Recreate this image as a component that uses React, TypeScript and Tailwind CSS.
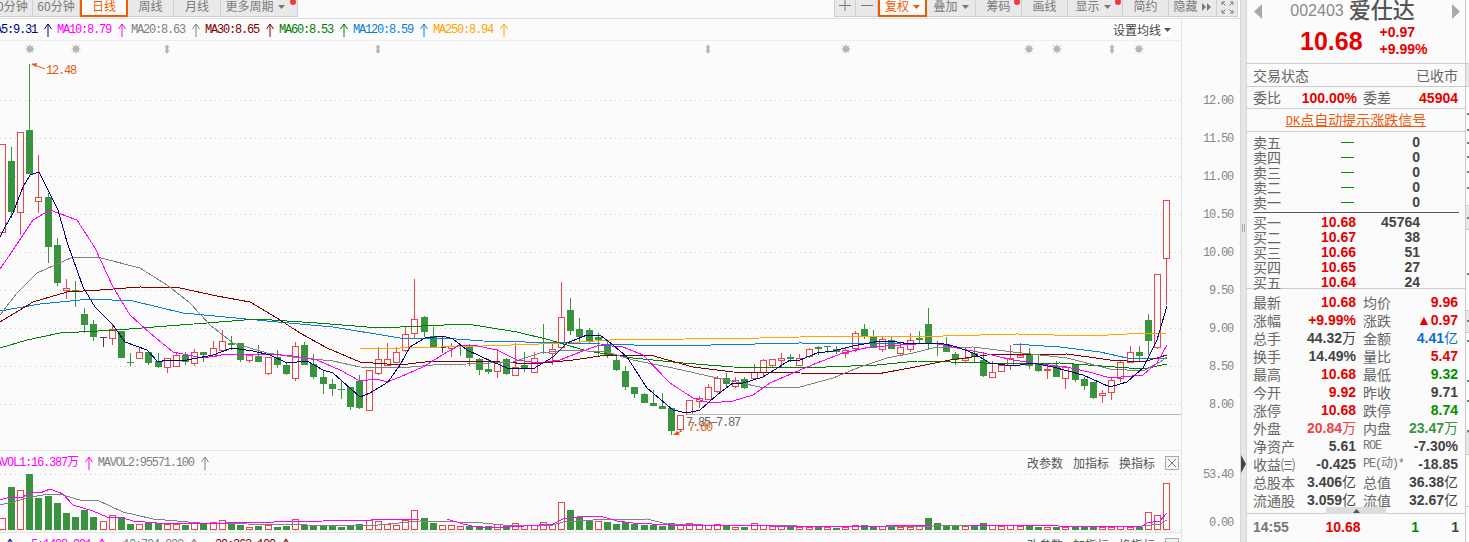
import React from 'react';

const mono = "font-['Liberation_Mono','Noto_Sans_CJK_SC',monospace]";
const monoText = `${mono} text-[12px] tracking-[-1.2px]`;
const RED = '#e8484a';
const GREEN = '#3a933e';

// i, body top, body bottom, wick high, wick low (page pixels)
const up: number[][] = [
  [0, 144, 232, 144, 232], [2, 132, 212, 132, 235], [4, 197, 201, 155, 213], [7, 288, 290, 279, 299], [12, 329, 338, 325, 345],
  [15, 352, 358, 348, 358], [18, 358, 367, 358, 373], [19, 355, 366, 353, 366], [21, 352, 363, 349, 366], [23, 348, 356, 341, 357],
  [24, 341, 350, 330, 350], [27, 355, 360, 355, 363], [29, 357, 373, 357, 375], [32, 346, 378, 342, 381], [40, 370, 410, 370, 410],
  [41, 359, 373, 347, 375], [42, 359, 365, 343, 365], [43, 352, 362, 347, 362], [44, 334, 350, 326, 352], [45, 319, 333, 279, 338],
  [49, 346, 348, 343, 357], [54, 362, 371, 349, 378], [56, 367, 375, 343, 375], [58, 358, 372, 352, 373], [60, 349, 353, 342, 365],
  [61, 317, 347, 282, 347], [74, 415, 429, 415, 432], [75, 400, 414, 400, 414], [76, 398, 401, 396, 408], [77, 387, 399, 384, 400],
  [78, 378, 391, 376, 393], [80, 380, 386, 377, 388], [82, 372, 378, 364, 378], [83, 360, 372, 359, 377], [84, 359, 365, 359, 368],
  [85, 358, 360, 353, 368], [87, 358, 365, 354, 365], [88, 349, 356, 348, 358], [92, 350, 353, 347, 358], [93, 333, 348, 331, 352],
  [96, 339, 349, 337, 352], [98, 347, 353, 343, 355], [99, 340, 349, 333, 352], [105, 358, 360, 348, 363], [108, 372, 377, 361, 377],
  [109, 365, 371, 365, 371], [110, 358, 365, 345, 370], [111, 355, 357, 343, 357], [114, 369, 370, 363, 379], [116, 367, 378, 367, 389],
  [120, 393, 395, 390, 403], [121, 380, 392, 378, 400], [122, 362, 378, 360, 382], [123, 352, 362, 346, 363], [126, 274, 347, 274, 349],
  [127, 200, 258, 200, 305],
];
const down: number[][] = [
  [1, 161, 212, 147, 218], [3, 130, 174, 64, 174], [5, 197, 247, 193, 263], [6, 245, 283, 238, 286], [8, 290, 291, 281, 307],
  [9, 314, 325, 308, 333], [10, 324, 337, 320, 341], [13, 331, 358, 331, 358], [14, 362, 363, 353, 366], [16, 352, 363, 352, 365],
  [17, 361, 367, 353, 368], [20, 355, 362, 352, 365], [22, 352, 355, 352, 362], [25, 343, 345, 336, 350], [26, 343, 360, 343, 362],
  [28, 356, 362, 345, 362], [30, 357, 365, 350, 368], [31, 365, 374, 363, 375], [33, 345, 365, 342, 365], [34, 364, 377, 354, 379],
  [35, 377, 384, 370, 394], [36, 384, 389, 379, 396], [37, 389, 390, 380, 399], [38, 387, 407, 387, 410], [39, 381, 408, 375, 409],
  [46, 317, 332, 316, 337], [47, 336, 347, 327, 348], [50, 345, 346, 344, 356], [51, 346, 358, 344, 366], [52, 359, 370, 358, 375],
  [53, 369, 372, 359, 374], [55, 359, 374, 358, 375], [57, 365, 368, 352, 372], [59, 352, 353, 324, 354], [62, 310, 331, 298, 335],
  [63, 329, 337, 318, 344], [64, 330, 341, 328, 343], [65, 337, 340, 333, 357], [66, 344, 355, 340, 358], [67, 360, 370, 355, 371],
  [68, 371, 387, 366, 390], [69, 387, 394, 387, 398], [70, 394, 403, 393, 403], [71, 403, 406, 390, 406], [72, 406, 409, 393, 409],
  [73, 408, 431, 408, 435], [79, 378, 384, 373, 387], [81, 379, 388, 377, 389], [86, 357, 359, 354, 362], [89, 347, 349, 346, 355],
  [90, 346, 347, 346, 353], [91, 349, 352, 346, 354], [94, 329, 337, 324, 339], [95, 337, 348, 330, 348], [97, 340, 349, 337, 349],
  [100, 338, 340, 331, 343], [101, 324, 343, 308, 349], [102, 343, 344, 341, 356], [103, 344, 352, 337, 352], [104, 354, 360, 352, 365],
  [106, 353, 357, 348, 363], [107, 360, 376, 352, 377], [112, 355, 366, 348, 369], [113, 364, 371, 354, 372], [115, 366, 377, 361, 377],
  [117, 364, 380, 364, 382], [118, 379, 386, 377, 390], [119, 382, 398, 382, 399], [124, 352, 356, 346, 362], [125, 320, 341, 314, 355],
];

const candleX = (i: number) => Math.round(2.7 + i * 9.17);

const maLines: [string, string][] = [
  ['#0a7fd8', '0,311 40,304 90,299 133,301 183,313 267,321 333,327 400,338 443,338 483,341 567,343 667,346 800,343 900,344 1013,344 1060,347 1100,352 1127,358 1167,359'],
  ['#ffa500', '360,348 400,348 483,346 567,343 610,340 760,338 800,337 943,336 1017,334 1090,336 1127,334 1167,333'],
  ['#008000', '0,348 27,340 60,333 117,330 167,326 207,323 257,319 317,323 367,327 400,327 467,324 517,332 550,340 587,351 633,358 683,363 733,367 800,368 877,365 917,361 1017,364 1060,363 1143,369 1167,364'],
  ['#800000', '0,322 33,302 67,292 100,290 140,287 180,288 217,296 250,302 277,318 300,333 327,348 360,362 400,365 433,361 483,361 533,364 573,360 607,355 650,355 693,367 733,372 800,373 877,374 910,368 950,360 987,355 1067,354 1110,360 1143,362 1167,355'],
  ['#808080', '0,315 17,293 37,273 73,257 97,257 140,268 167,285 190,303 210,325 233,343 267,353 293,357 333,361 360,367 400,368 433,365 467,364 513,362 540,353 567,350 607,352 633,360 673,368 717,378 760,387 800,387 833,378 860,367 887,358 913,353 933,348 973,347 1013,352 1067,358 1110,369 1143,371 1160,362 1167,357'],
  ['#ff00ff', '0,269 13,250 33,220 50,210 77,220 95,248 113,287 130,315 150,333 173,352 203,358 227,354 270,354 293,356 317,360 340,370 360,381 377,379 387,382 400,377 423,367 447,352 460,345 473,345 497,350 517,360 538,363 560,360 580,352 600,345 623,347 643,355 670,383 693,398 710,403 733,401 753,395 770,383 800,370 817,363 843,353 870,347 900,345 933,343 957,348 983,353 1013,360 1040,364 1067,367 1093,373 1110,378 1143,375 1157,363 1167,345'],
  ['#000080', '0,237 5,227 13,213 23,187 30,175 39,172 58,210 67,242 83,287 95,307 113,325 125,342 147,350 158,362 167,360 187,360 213,355 232,348 253,351 270,355 287,363 307,361 323,370 333,373 360,397 370,393 388,382 400,365 410,347 425,338 443,336 453,339 467,350 493,362 507,368 533,369 553,357 567,343 587,335 600,335 613,345 627,357 647,388 673,410 687,413 700,410 717,395 733,383 743,383 763,377 790,360 800,360 817,353 833,351 853,346 880,341 897,342 910,344 940,343 957,347 973,353 990,363 1013,366 1033,363 1053,367 1083,375 1110,387 1127,382 1143,368 1157,340 1167,306'],
];

// top of each volume bar, by candle index
const volTop = [518, 487, 490, 474, 498, 496, 503, 513, 517, 510, 517, 521, 515, 517, 524, 524, 523, 523, 524, 524, 525, 523, 523, 522, 520, 523, 525, 527, 526, 525, 527, 526, 519, 525, 525, 525, 525, 527, 526, 524, 520, 521, 524, 525, 520, 510, 518, 523, 525, 525, 526, 526, 526, 526, 524, 526, 523, 525, 525, 522, 524, 502, 510, 517, 520, 521, 522, 524, 522, 524, 525, 525, 526, 523, 525, 523, 525, 525, 524, 525, 527, 527, 523, 525, 526, 526, 525, 527, 527, 527, 527, 528, 527, 525, 525, 527, 526, 526, 527, 527, 526, 518, 523, 525, 525, 526, 525, 523, 525, 526, 525, 526, 526, 527, 527, 527, 527, 527, 527, 527, 527, 527, 526, 527, 527, 512, 515, 483];
const volRed = new Set([0, 2, 11, 12, 15, 18, 19, 21, 23, 24, 27, 29, 32, 40, 41, 42, 43, 44, 45, 48, 49, 50, 54, 56, 57, 58, 59, 60, 61, 65, 74, 75, 76, 77, 78, 80, 82, 83, 84, 85, 87, 88, 90, 92, 93, 96, 98, 99, 100, 105, 108, 109, 110, 111, 114, 116, 120, 121, 122, 123, 125, 126, 127]);

const volLines: [string, string][] = [
  ['#808080', '0,505 13,502 30,497 50,494 63,495 83,501 97,500 123,512 153,519 200,523 247,524 367,526 420,521 457,522 483,523 503,525 553,525 563,522 593,520 647,519 667,524 703,525 797,526 840,527 933,526 990,525 1017,525 1100,527 1143,526 1160,524 1167,520'],
  ['#ff00ff', '0,500 10,497 23,497 30,492 40,493 50,489 63,494 73,505 93,511 107,517 123,518 133,521 157,523 177,524 420,519 447,519 463,524 477,527 510,527 553,524 563,519 577,517 600,516 617,521 633,523 670,525 703,525 840,527 933,525 970,525 990,525 1127,527 1142,526 1147,523 1160,521 1167,513'],
];

const Caret = ({ color = '#777777' }: { color?: string }) => (
  <svg width="7" height="4" viewBox="0 0 7 4" className="shrink-0">
    <polygon points="0,0 7,0 3.5,4" fill={color} />
  </svg>
);

const Dot = () => <span className="absolute -top-[1px] right-[1px] h-[6px] w-[6px] rounded-full bg-[#f03a3a]" />;

const Tool = ({ w, children, active, dot }: { w: string; children: React.ReactNode; active?: boolean; dot?: boolean }) => (
  <div
    className={`relative flex h-[17px] shrink-0 items-start justify-center gap-1 border-b pt-[0px] text-[12px] leading-[12px] ${w} ${
      active ? 'border-x-2 border-b-2 border-[#f05a00] bg-[#fbfbfb] text-[#f05a00]' : 'border-r border-[#cfcfcf] bg-[#e9e9e9] text-[#7a7a7a]'
    }`}
  >
    {children}
    {dot && <Dot />}
  </div>
);

const Arrow = ({ color }: { color: string }) => (
  <svg width="8" height="14" viewBox="0 0 8 14" className="shrink-0">
    <path d="M4 14V1M0.5 6L4 1l3.5 5" fill="none" stroke={color} strokeWidth="1" />
  </svg>
);

const MaItem = ({ label, color, textClass }: { label: string; color: string; textClass: string }) => (
  <div className="flex items-center gap-[7px]">
    <span className={`${monoText} whitespace-nowrap ${textClass}`}>{label}</span>
    <Arrow color={color} />
  </div>
);

const Sun = ({ x }: { x: number }) => (
  <g stroke="#b4b4b4" strokeWidth="1">
    <circle cx={x} cy={49} r={2.6} fill="#b4b4b4" />
    <path d={`M${x - 4.5} 49h9M${x} 44.5v9M${x - 3.5} 45.5l7 7M${x + 3.5} 45.5l-7 7`} />
  </g>
);

const Diamond = ({ x }: { x: number }) => (
  <path d={`M${x} 44.5l2.5 3h-1.2v3h1.2l-2.5 3.500-2.500-3.500h1.200v-3h-1.200z`} fill="#b4b4b4" />
);

const PaneTools = ({ close }: { close?: boolean }) => (
  <div className="flex items-center gap-[10px] text-[12px] text-[#555555]">
    <span>改参数</span>
    <span>加指标</span>
    <span>换指标</span>
    <span className="relative flex h-[14px] w-[14px] items-center justify-center border border-[#a8a8a8] bg-[#f4f4f4]">
      {close && (
        <svg width="10" height="10" viewBox="0 0 10 10">
          <path d="M1 1l8 8M9 1l-8 8" stroke="#777777" strokeWidth="1" />
        </svg>
      )}
    </span>
  </div>
);

const Chart = () => (
  <svg width="1240" height="409" viewBox="0 41 1240 409" className="block shrink-0">
    {[100, 138, 176, 214, 252, 290, 328, 366, 404].map((y) => (
      <line key={y} x1="0" x2="1181" y1={y + 0.5} y2={y + 0.5} stroke="#cfcfcf" strokeWidth="1" strokeDasharray="1 4" />
    ))}
    <g shapeRendering="crispEdges">
      {down.map(([i, t, b, h, l]) => (
        <g key={i}>
          <line x1={candleX(i) - 0.5} x2={candleX(i) - 0.5} y1={h} y2={l} stroke={GREEN} />
          <rect x={candleX(i) - 4} y={t} width="7" height={Math.max(b - t, 1)} fill={GREEN} />
        </g>
      ))}
      {up.map(([i, t, b, h, l]) => (
        <g key={i}>
          <line x1={candleX(i) - 0.5} x2={candleX(i) - 0.5} y1={h} y2={t} stroke={RED} />
          <line x1={candleX(i) - 0.5} x2={candleX(i) - 0.5} y1={b} y2={l} stroke={RED} />
          <rect x={candleX(i) - 3.5} y={t + 0.5} width="6" height={Math.max(b - t, 1)} fill="#fbfbfb" stroke={RED} />
        </g>
      ))}
      <path d="M100 337.500h7M103.500 337v10M439 347.500h7M442.500 336v17" stroke="#444444" fill="none" />
      {maLines.map(([color, pts]) => (
        <polyline key={color} points={pts} fill="none" stroke={color} strokeWidth="1" />
      ))}
    </g>
    {[30, 76, 846, 1029, 1057, 1139].map((x) => (
      <Sun key={x} x={x} />
    ))}
    {[167, 378, 708, 1112].map((x) => (
      <Diamond key={x} x={x} />
    ))}
    <path d="M45 69l-13-5" stroke="#e85a10" fill="none" />
    <polygon points="31,64 37,63 36,67" fill="#e85a10" />
    <text x="46" y="74" className={monoText} fill="#e85a10">
      12.48
    </text>
    <line x1="687" x2="1181" y1="414.500" y2="414.500" stroke="#b8b8b8" />
    <text x="686" y="426" className={monoText} fill="#666666">
      7.85—7.87
    </text>
    <text x="688" y="431" className={monoText} fill="#e85a10">
      7.60
    </text>
    <path d="M682 431l-7 3" stroke="#e85a10" fill="none" />
    <polygon points="673,435 680,435 677,431" fill="#e85a10" />
    {['12.00', '11.50', '11.00', '10.50', '10.00', '9.50', '9.00', '8.50', '8.00'].map((p, i) => (
      <text key={p} x="1233" y={104 + i * 38} textAnchor="end" className={monoText} fill="#888888">
        {p}
      </text>
    ))}
    <line x1="1181.500" x2="1181.500" y1="41" y2="450" stroke="#e4e4e4" />
  </svg>
);

const Volume = () => (
  <svg width="1240" height="58" viewBox="0 474 1240 58" className="block shrink-0 overflow-visible">
    <line x1="0" x2="1181" y1="474.500" y2="474.500" stroke="#cfcfcf" strokeDasharray="1 4" />
    <line x1="0" x2="1181" y1="530.500" y2="530.500" stroke="#cfcfcf" strokeDasharray="1 4" />
    <g shapeRendering="crispEdges">
      {volTop.map((t, i) =>
        volRed.has(i) ? (
          <rect key={i} x={candleX(i) - 3.5} y={t + 0.5} width="6" height={529 - t} fill="#fbfbfb" stroke={RED} />
        ) : (
          <rect key={i} x={candleX(i) - 4} y={t} width="7" height={530 - t} fill={GREEN} />
        ),
      )}
      {volLines.map(([color, pts]) => (
        <polyline key={color} points={pts} fill="none" stroke={color} strokeWidth="1" />
      ))}
    </g>
    <text x="1233" y="478" textAnchor="end" className={monoText} fill="#888888">
      53.40
    </text>
    <text x="1233" y="526" textAnchor="end" className={monoText} fill="#888888">
      0.00
    </text>
    <line x1="1181.500" x2="1181.500" y1="474" y2="532" stroke="#e4e4e4" />
  </svg>
);

const numFont = "font-['Liberation_Sans','Noto_Sans_CJK_SC',sans-serif] font-bold text-[14px]";

const Val = ({ v, c }: { v: string; c: string }) => {
  const unit = /[万亿]$/.test(v) ? v.slice(-1) : '';
  const num = unit ? v.slice(0, -1) : v;
  return (
    <span className={`whitespace-nowrap ${numFont} ${c}`}>
      {num}
      {unit && <span className="font-normal">{unit}</span>}
    </span>
  );
};

const stats: [string, string, string, string, string, string][] = [
  ['最新', '10.68', 'text-[#e60000]', '均价', '9.96', 'text-[#e60000]'],
  ['涨幅', '+9.99%', 'text-[#e60000]', '涨跌', '▲0.97', 'text-[#e60000]'],
  ['总手', '44.32万', 'text-[#444444]', '金额', '4.41亿', 'text-[#0a70d0]'],
  ['换手', '14.49%', 'text-[#444444]', '量比', '5.47', 'text-[#e60000]'],
  ['最高', '10.68', 'text-[#e60000]', '最低', '9.32', 'text-[#009000]'],
  ['今开', '9.92', 'text-[#e60000]', '昨收', '9.71', 'text-[#444444]'],
  ['涨停', '10.68', 'text-[#e60000]', '跌停', '8.74', 'text-[#009000]'],
  ['外盘', '20.84万', 'text-[#ee4444]', '内盘', '23.47万', 'text-[#3a933e]'],
  ['净资产', '5.61', 'text-[#444444]', 'ROE', '-7.30%', 'text-[#444444]'],
  ['收益㈢', '-0.425', 'text-[#444444]', 'PE(动)*', '-18.85', 'text-[#444444]'],
  ['总股本', '3.406亿', 'text-[#444444]', '总值', '36.38亿', 'text-[#444444]'],
  ['流通股', '3.059亿', 'text-[#444444]', '流值', '32.67亿', 'text-[#444444]'],
];

const sells = ['卖五', '卖四', '卖三', '卖二', '卖一'];
const buys: [string, string, string][] = [
  ['买一', '10.68', '45764'],
  ['买二', '10.67', '38'],
  ['买三', '10.66', '51'],
  ['买四', '10.65', '27'],
  ['买五', '10.64', '24'],
];

const QuoteRow = ({ label, price, vol }: { label: string; price?: string; vol: string }) => (
  <div className="grid h-[15px] grid-cols-[103px_64px] items-center text-[14px] leading-[15px] text-[#666666]">
    <div className="flex justify-between">
      <span>{label}</span>
      {price ? <Val v={price} c="text-[#e60000]" /> : <span className="mr-[2px] mt-[7px] h-[1px] w-[13px] bg-[#009000]" />}
    </div>
    <div className="text-right">
      <Val v={vol} c="text-[#444444]" />
    </div>
  </div>
);

const Quote = () => (
  <div className="flex h-[542px] w-[218px] shrink-0 flex-col bg-[#fbfbfb] font-['Noto_Sans_CJK_SC',sans-serif] text-[#666666]">
    <div className="relative h-[64px] shrink-0 overflow-hidden border-b border-[#cccccc]">
      <div className="flex h-[22px] items-center justify-between pl-[7px] pr-[5px]">
        <svg width="8" height="15" viewBox="0 0 8 15">
          <polygon points="8,0 8,15 0,7.500" fill="#a8a8a8" />
        </svg>
        <div className="mr-[9px] flex items-center gap-[5px]">
          <span className="font-['Liberation_Sans',sans-serif] text-[16px] text-[#8a8a8a]">002403</span>
          <span className="-mt-[6px] text-[22px] font-medium leading-[26px] text-[#555555]">爱仕达</span>
        </div>
        <svg width="8" height="15" viewBox="0 0 8 15">
          <polygon points="0,0 0,15 8,7.500" fill="#a8a8a8" />
        </svg>
      </div>
      <div className="flex items-center gap-[17px] pl-[53px]">
        <span className="font-['Liberation_Sans',sans-serif] text-[25px] font-bold leading-[38px] text-[#e60000]">10.68</span>
        <div className="flex flex-col font-['Liberation_Sans',sans-serif] text-[14px] font-bold leading-[17px] text-[#e60000]">
          <span>+0.97</span>
          <span>+9.99%</span>
        </div>
      </div>
    </div>
    <div className="flex h-[23px] shrink-0 items-center justify-between border-b border-[#cccccc] pl-[6px] pr-[7px] text-[14px]">
      <span>交易状态</span>
      <span>已收市</span>
    </div>
    <div className="flex h-[22px] shrink-0 items-center whitespace-nowrap border-b border-[#cccccc] pl-[6px] pr-[7px] text-[14px]">
      <span className="w-[28px]">委比</span>
      <span className="w-[76px] text-right">
        <Val v="100.00%" c="text-[#e60000]" />
      </span>
      <span className="ml-[6px]">委差</span>
      <span className="flex-1 text-right">
        <Val v="45904" c="text-[#e60000]" />
      </span>
    </div>
    <div className="flex h-[23px] shrink-0 items-center justify-center border-b border-[#cccccc] text-[14px] text-[#ee5a0a]">
      <span className="underline">
        <span className={`${mono} text-[12px]`}>DK</span>点自动提示涨跌信号
      </span>
    </div>
    <div className="flex h-[80px] shrink-0 flex-col pl-[6px] pt-[2px]">
      {sells.map((s) => (
        <QuoteRow key={s} label={s} vol="0" />
      ))}
    </div>
    <div className="mx-[6px] h-[1px] w-[206px] shrink-0 bg-[#555555]" />
    <div className="flex h-[76px] shrink-0 flex-col border-b border-[#cccccc] pl-[6px] pt-[1px]">
      {buys.map(([l, p, v]) => (
        <QuoteRow key={l} label={l} price={p} vol={v} />
      ))}
    </div>
    <div className="flex h-[218px] shrink-0 flex-col pl-[6px] pt-[4px]">
      {stats.map(([a, av, ac, b, bv, bc]) => (
        <div key={a} className="grid h-[18px] grid-cols-[103px_95px] items-center gap-x-[7px] text-[14px] leading-[18px]">
          <div className="flex justify-between">
            <span className="whitespace-nowrap">{a}</span>
            <Val v={av} c={ac} />
          </div>
          <div className="flex justify-between">
            <span className={b === 'ROE' || b === 'PE(动)*' ? `${monoText} text-[#777777]` : ''}>{b}</span>
            <Val v={bv} c={bc} />
          </div>
        </div>
      ))}
    </div>
    <div className="flex h-[7px] shrink-0 items-start justify-center border-b border-[#cccccc]">
      <div className="flex h-[7px] w-[60px] items-center justify-center bg-[#dddddd]">
        <svg width="7" height="4" viewBox="0 0 7 4">
          <polygon points="0,4 7,4 3.500,0" fill="#555555" />
        </svg>
      </div>
    </div>
    <div className="flex h-[22px] items-center pl-[6px] pr-[6px]">
      <span className="w-[60px]">
        <Val v="14:55" c="text-[#777777]" />
      </span>
      <span className="w-[60px] text-center">
        <Val v="10.68" c="text-[#e60000]" />
      </span>
      <span className="w-[46px] text-right">
        <Val v="1" c="text-[#009000]" />
      </span>
      <span className="flex-1 text-right">
        <Val v="1" c="text-[#444444]" />
      </span>
    </div>
  </div>
);

// edge of the next column, mostly outside the window
const stripTicks = [113, 129, 142, 156, 171, 187, 217, 273, 320, 340, 380, 400, 430];

const NextColumn = () => (
  <div className="relative flex h-[542px] flex-1 flex-col border-l border-[#cccccc] bg-[#fbfbfb]">
    <div className="h-[64px] shrink-0 border-b border-[#cccccc]" />
    <div className="h-[23px] shrink-0 border-b border-[#cccccc] bg-[#e8e8e8]" />
    <div className="h-[119px] shrink-0 border-b border-[#cccccc]" />
    <div className="h-[24px] shrink-0 border-b border-[#cccccc] bg-[#e8e8e8]" />
    <div className="h-[81px] shrink-0 border-b border-[#cccccc]" />
    <div className="h-[22px] shrink-0 border-b border-[#cccccc] bg-[#e8e8e8]" />
    <div className="h-[100px] shrink-0 border-b border-[#cccccc]" />
    <div className="h-[22px] shrink-0 border-b border-[#cccccc] bg-[#e8e8e8]" />
    <div className="h-[52px] shrink-0 border-b border-[#cccccc]" />
    {stripTicks.map((y) => (
      <span key={y} className="absolute left-[1px] h-[2px] w-[2px] bg-[#777777]" style={{ top: y }} />
    ))}
  </div>
);

export default function App() {
  return (
    <div className="flex h-[542px] w-[1469px] overflow-hidden bg-[#fbfbfb] font-['Noto_Sans_CJK_SC',sans-serif]">
      <div className="flex h-[542px] w-[1240px] shrink-0 flex-col overflow-hidden">
        {/* toolbar */}
        <div className="flex h-[19px] shrink-0 items-start justify-between border-b border-[#dedede]">
          <div className="flex">
            <div className="-ml-[14px] flex">
              <Tool w="w-[47px]">60分钟</Tool>
            </div>
            <Tool w="w-[47px]">60分钟</Tool>
            <Tool w="w-[48px]" active>日线</Tool>
            <Tool w="w-[46px]">周线</Tool>
            <Tool w="w-[47px]">月线</Tool>
            <Tool w="w-[77px]" dot>
              更多周期
              <span className="mr-2 mt-[5px]">
                <Caret />
              </span>
            </Tool>
          </div>
          <div className="flex pr-[2px]">
            <Tool w="w-[22px] border-l">
              <svg width="12" height="12" viewBox="0 0 12 12">
                <path d="M6 0v11M0 5.500h12" stroke="#777777" />
              </svg>
            </Tool>
            <Tool w="w-[22px]">
              <svg width="12" height="12" viewBox="0 0 12 12">
                <path d="M0 5.500h12" stroke="#777777" />
              </svg>
            </Tool>
            <Tool w="w-[49px]" active>
              复权
              <span className="mt-[5px]">
                <Caret color="#f05a00" />
              </span>
            </Tool>
            <Tool w="w-[49px]">
              叠加
              <span className="mt-[5px]">
                <Caret />
              </span>
            </Tool>
            <Tool w="w-[46px]" dot>筹码</Tool>
            <Tool w="w-[46px]">画线</Tool>
            <Tool w="w-[55px]" dot>
              显示
              <span className="mr-1 mt-[5px]">
                <Caret />
              </span>
            </Tool>
            <Tool w="w-[46px]">简约</Tool>
            <Tool w="w-[48px]">
              隐藏
              <svg width="10" height="8" viewBox="0 0 10 8" className="mt-[3px]">
                <path d="M0 0l4 4-4 4zM5 0l4 4-4 4z" fill="#777777" />
              </svg>
            </Tool>
            <Tool w="w-[21px]">
              <svg width="13" height="13" viewBox="0 0 13 13" className="mt-[1px]">
                <path d="M1 1l3.500 3.500M1 1v3M1 1h3M12 1L8.500 4.500M12 1v3M12 1H9M1 12l3.500-3.500M1 12V9M1 12h3M12 12L8.500 8.500M12 12V9M12 12H9" stroke="#777777" fill="none" />
              </svg>
            </Tool>
          </div>
        </div>
        {/* moving average legend */}
        <div className="flex h-[22px] w-[1182px] shrink-0 items-center justify-between border-b border-r border-[#eeeeee] border-r-[#e4e4e4]">
          <div className="-ml-[11px] flex items-center gap-[5px]">
            <MaItem label="MA5:9.31" color="#000080" textClass="text-[#000080]" />
            <MaItem label="MA10:8.79" color="#ff00ff" textClass="text-[#ff00ff]" />
            <MaItem label="MA20:8.63" color="#808080" textClass="text-[#808080]" />
            <MaItem label="MA30:8.65" color="#800000" textClass="text-[#800000]" />
            <MaItem label="MA60:8.53" color="#008000" textClass="text-[#008000]" />
            <MaItem label="MA120:8.59" color="#0a7fd8" textClass="text-[#0a7fd8]" />
            <MaItem label="MA250:8.94" color="#ffa500" textClass="text-[#ffa500]" />
          </div>
          <div className="mr-[9px] flex h-[14px] w-[60px] items-center gap-[3px] bg-white pl-[1px] text-[12px] text-[#444444]">
            <span className="whitespace-nowrap">设置均线</span>
            <Caret color="#555555" />
          </div>
        </div>
        <Chart />
        {/* volume pane */}
        <div className="flex h-[24px] w-[1182px] shrink-0 items-center justify-between border-r border-t border-[#e4e4e4] pr-[2px]">
          <div className="-ml-[11px] flex items-center gap-[5px]">
            <MaItem label="MAVOL1:16.387万" color="#ff00ff" textClass="text-[#ff00ff]" />
            <MaItem label="MAVOL2:95571.100" color="#808080" textClass="text-[#808080]" />
          </div>
          <PaneTools close />
        </div>
        <Volume />
        {/* next pane, cut off by the window */}
        <div className="flex h-[24px] w-[1182px] shrink-0 items-start justify-between border-r border-t border-[#e4e4e4] pr-[2px] pt-[3px]">
          <div className="ml-[6px] flex items-center gap-[17px]">
            <Arrow color="#000080" />
            <MaItem label="5:1498.991" color="#ff00ff" textClass="text-[#ff00ff]" />
            <MaItem label="10:704.000" color="#808080" textClass="text-[#808080]" />
            <MaItem label="20:262.100" color="#800000" textClass="text-[#800000]" />
          </div>
          <PaneTools />
        </div>
      </div>
      {/* drag handle */}
      <div className="relative h-[542px] w-[7px] shrink-0 border-x border-[#d6d6d6] bg-[#e6e6e6]">
        <span className="absolute left-[1px] top-[224px] h-[8px] w-[3px] border-x border-[#aaaaaa]" />
        <svg width="5" height="18" viewBox="0 0 5 18" className="absolute left-0 top-[455px]">
          <polygon points="0,0 5,9 0,18" fill="#444444" />
        </svg>
      </div>
      <Quote />
      <NextColumn />
    </div>
  );
}
